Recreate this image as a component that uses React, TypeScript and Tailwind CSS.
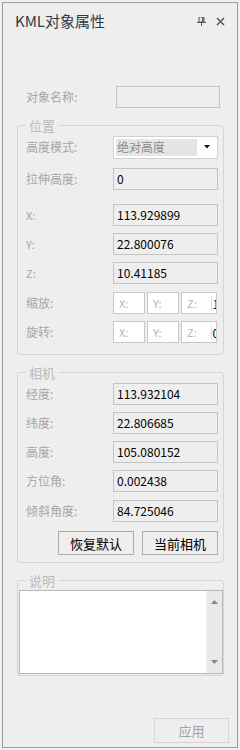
import React from "react";

const FONT = "font-['Noto_Sans_CJK_SC','Microsoft_YaHei',sans-serif]";

function Label({ children, small }: { children: React.ReactNode; small?: boolean }) {
  return (
    <span
      className={`w-[87px] shrink-0 ${small ? "text-[11px]" : "text-[12px]"} leading-[16px] text-[#a6a6a6]`}
    >
      {children}
    </span>
  );
}

function Field({ value }: { value: string }) {
  return (
    <div className="w-[105px] h-[22px] border border-[#c4c4c4] bg-[#eeeeee] flex items-center pl-[3px] text-[12px] leading-[16px] text-black">
      {value}
    </div>
  );
}

function Row({ label, value, small, mt }: { label: string; value: string; small?: boolean; mt: string }) {
  return (
    <div className={`flex items-center h-[22px] ${mt}`}>
      <Label small={small}>{label}</Label>
      <Field value={value} />
    </div>
  );
}

function SmallBox({ ph, w, tail }: { ph: string; w: string; tail?: string }) {
  return (
    <div className={`${w} h-[22px] border border-[#c8c8c8] bg-white flex items-center pl-[5px] text-[11px] leading-[14px] text-[#b4b4b4]`}>
      <span>{ph}</span>
      {tail !== undefined && (
        <span className="ml-auto w-[5px] h-[15px] border-l border-[#dcdcdc] bg-white overflow-hidden text-[12px] leading-[15px] text-black pl-[0.5px]">
          {tail}
        </span>
      )}
    </div>
  );
}

function TripleRow({ label, tail, mt }: { label: string; tail: string; mt: string }) {
  return (
    <div className={`flex items-center h-[22px] ${mt}`}>
      <Label>{label}</Label>
      <div className="flex gap-[2px]">
        <SmallBox ph="X:" w="w-[32px]" />
        <SmallBox ph="Y:" w="w-[32px]" />
        <SmallBox ph="Z:" w="w-[36px]" tail={tail} />
      </div>
    </div>
  );
}

function Legend({ children }: { children: React.ReactNode }) {
  return <legend className="px-[3px] text-[13px] leading-[17px] text-[#bababa]">{children}</legend>;
}

export default function App() {
  return (
    <div className={`w-[240px] h-[750px] bg-[#f0f0f0] p-[2px] ${FONT}`}>
      <div className="h-full border border-[#a0a0a0] bg-[#eeeeee] flex flex-col">
        {/* Title bar */}
        <div className="h-[36px] flex items-center pl-[12px] pr-[12px]">
          <span className="text-[15px] leading-[20px] text-[#2f3b49]">KML对象属性</span>
          <div className="ml-auto flex items-center gap-[10px]">
            <svg width="9" height="9" viewBox="0 0 9 9" className="mt-[1px]">
              <rect x="2" y="0" width="5" height="5" fill="none" stroke="#555" strokeWidth="1" />
              <rect x="5" y="0.5" width="1.5" height="4.5" fill="#555" />
              <rect x="0" y="5" width="9" height="1" fill="#555" />
              <rect x="4" y="6" width="1" height="3" fill="#555" />
            </svg>
            <svg width="9" height="9" viewBox="0 0 9 9" className="mt-[1px]">
              <path d="M1 1 L8 8 M8 1 L1 8" stroke="#5a5a5a" strokeWidth="1.6" />
            </svg>
          </div>
        </div>

        {/* Object name */}
        <div className="flex items-center h-[22px] mt-[47px] pl-[23px]">
          <span className="w-[90px] shrink-0 text-[12px] leading-[16px] text-[#a6a6a6]">对象名称:</span>
          <div className="w-[104px] h-[22px] border border-[#c4c4c4] bg-[#eeeeee]" />
        </div>

        <div className="ml-[14px] mr-[13px] flex flex-col">
          {/* 位置 */}
          <fieldset className="mt-[9px] border border-[#d5d5d5] rounded-[3px] pl-[8px] pr-[5px] pt-[2px] pb-[11px]">
            <Legend>位置</Legend>
            <div className="flex items-center h-[22px]">
              <Label>高度模式:</Label>
              <div className="w-[105px] h-[23px] border border-[#d0d0d0] bg-white flex items-stretch p-[2px]">
                <div className="w-[81px] bg-[#e5e5e5] text-[#8a8a8a] text-[12px] leading-[16px] pl-[1px] flex items-center">
                  绝对高度
                </div>
                <div className="flex-1 flex items-center justify-center pl-[1px]">
                  <svg width="6" height="4" viewBox="0 0 6 4">
                    <path d="M0 0 H6 L3 3.5 Z" fill="#111" />
                  </svg>
                </div>
              </div>
            </div>
            <Row label="拉伸高度:" value="0" mt="mt-[10px]" />
            <Row label="X:" value="113.929899" small mt="mt-[14px]" />
            <Row label="Y:" value="22.800076" small mt="mt-[7px]" />
            <Row label="Z:" value="10.41185" small mt="mt-[7px]" />
            <TripleRow label="缩放:" tail="1" mt="mt-[8px]" />
            <TripleRow label="旋转:" tail="0" mt="mt-[7px]" />
          </fieldset>

          {/* 相机 */}
          <fieldset className="mt-[9px] border border-[#d5d5d5] rounded-[3px] pl-[8px] pr-[5px] pt-[2px] pb-[7px]">
            <Legend>相机</Legend>
            <Row label="经度:" value="113.932104" mt="mt-0" />
            <Row label="纬度:" value="22.806685" mt="mt-[7px]" />
            <Row label="高度:" value="105.080152" mt="mt-[7px]" />
            <Row label="方位角:" value="0.002438" mt="mt-[7px]" />
            <Row label="倾斜角度:" value="84.725046" mt="mt-[8px]" />
            <div className="flex justify-end gap-[8px] mt-[9px]">
              <div className="w-[76px] h-[24px] border border-[#adadad] bg-[#eeeeee] flex items-center justify-center text-[13px] leading-[17px] text-black">
                恢复默认
              </div>
              <div className="w-[76px] h-[24px] border border-[#adadad] bg-[#eeeeee] flex items-center justify-center text-[13px] leading-[17px] text-black">
                当前相机
              </div>
            </div>
          </fieldset>

          {/* 说明 */}
          <fieldset className="mt-[9px] border border-[#d5d5d5] rounded-[3px] pl-[1px] pr-0 pt-[1px] pb-[1px]">
            <legend className="ml-[7px] px-[3px] text-[13px] leading-[17px] text-[#bababa]">说明</legend>
            <div className="h-[84px] border border-[#b8b8b8] bg-white flex justify-end">
              <div className="w-[16px] bg-[#e9e9e9] border-l border-[#f4f4f4] flex flex-col items-center justify-between py-[9px]">
                <svg width="7" height="4" viewBox="0 0 7 4">
                  <path d="M0 4 H7 L3.5 0 Z" fill="#8a8a8a" />
                </svg>
                <svg width="7" height="4" viewBox="0 0 7 4">
                  <path d="M0 0 H7 L3.5 4 Z" fill="#8a8a8a" />
                </svg>
              </div>
            </div>
          </fieldset>
        </div>

        <div className="flex-1" />
        <div className="flex justify-end mr-[8px] mb-[4px]">
          <div className="w-[75px] h-[25px] border border-[#d6d6d6] bg-[#eeeeee] flex items-center justify-center text-[13px] leading-[17px] text-[#a3a3a3]">
            应用
          </div>
        </div>
      </div>
    </div>
  );
}
